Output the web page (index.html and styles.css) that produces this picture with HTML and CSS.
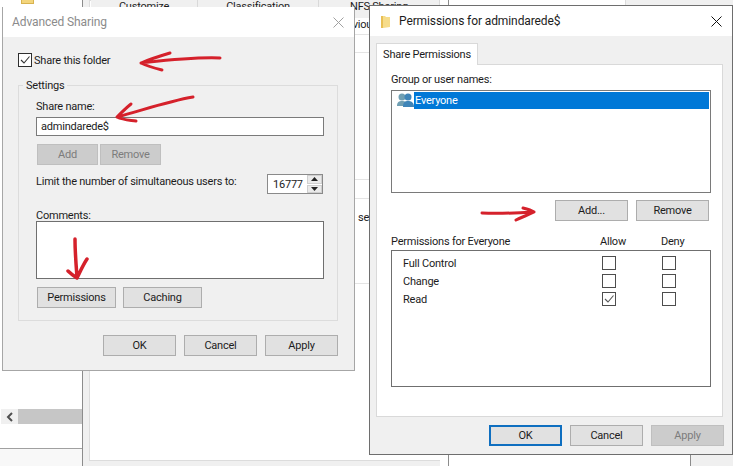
FILE: index.html
```html
<!DOCTYPE html>
<html lang="en">
<head>
<meta charset="utf-8">
<title>Advanced Sharing</title>
<link rel="stylesheet" href="styles.css">
</head>
<body>
<div class="desktop">
  <!-- windows behind -->
  <div class="explorer">
    <div class="tree-folder"></div>
    <div class="tree-name">Shar</div>
    <div class="hscroll">
      <span class="hscroll-btn"><svg width="10" height="10" viewBox="0 0 10 10"><path d="M7 1 3 5l4 4" fill="none" stroke="#505050" stroke-width="2"/></svg></span>
      <span class="hscroll-track"></span>
    </div>
    <div class="status"></div>
  </div>
  <div class="props">
    <div class="props-panel"></div>
    <div class="props-tabs">
      <span class="ptab ptab-a">Customize</span>
      <span class="ptab ptab-b">Classification</span>
      <span class="ptab ptab-c">NFS Sharing</span>
    </div>
    <div class="props-sub">Previous</div>
    <div class="props-line l0"></div>
    <div class="props-line l1"></div>
    <div class="props-line l2"></div>
    <div class="props-line l3"></div>
    <div class="props-line l4"></div>
    <div class="props-set">set</div>
  </div>
  <div class="back-right"></div>
  <div class="back-bottom"></div>

  <!-- Advanced Sharing -->
  <section class="win win-adv">
    <header class="titlebar">
      <span class="title title-off">Advanced Sharing</span>
      <svg class="close" width="11" height="11" viewBox="0 0 11 11"><path d="M.5.5l10 10M10.500.5l-10 10" stroke="#a0a0a0" fill="none"/></svg>
    </header>
    <div class="adv-body">
      <label class="share-check">
        <span class="box box-dark"><svg width="12" height="12" viewBox="0 0 12 12"><path d="M2 6l3 3 5.500-6.500" fill="none" stroke="#333" stroke-width="1.100"/></svg></span>
        <span class="share-text">Share this folder</span>
      </label>
      <fieldset class="settings">
        <legend>Settings</legend>
        <div class="lbl lbl-share">Share name:</div>
        <div class="input">admindarede$</div>
        <div class="btn-row small-btns">
          <span class="btn btn-off btn-s">Add</span>
          <span class="btn btn-off btn-s">Remove</span>
        </div>
        <div class="limit-row">
          <span class="limit-label">Limit the number of simultaneous users to:</span>
          <div class="spin">
            <span class="spin-val">16777</span>
            <span class="spin-btns">
              <span class="spin-b"><svg width="7" height="4" viewBox="0 0 7 4"><path d="M3.500 0 7 4H0z" fill="#222"/></svg></span>
              <span class="spin-b"><svg width="7" height="4" viewBox="0 0 7 4"><path d="M0 0h7L3.500 4z" fill="#222"/></svg></span>
            </span>
          </div>
        </div>
        <div class="lbl lbl-comments">Comments:</div>
        <div class="textarea"></div>
        <div class="btn-row perm-btns">
          <span class="btn btn-m">Permissions</span>
          <span class="btn btn-m">Caching</span>
        </div>
      </fieldset>
      <footer class="foot foot-adv">
        <span class="btn">OK</span>
        <span class="btn">Cancel</span>
        <span class="btn">Apply</span>
      </footer>
    </div>
  </section>

  <!-- Permissions -->
  <section class="win win-perm">
    <header class="titlebar titlebar-perm">
      <svg class="folder" width="10" height="13" viewBox="0 0 10 13"><path d="M0 1h4l1 1h4v10l-7 1H0z" fill="#f6dc8a"/><path d="M0 1h2v12H0z" fill="#e8bf55"/></svg>
      <span class="title">Permissions for admindarede$</span>
      <svg class="close" width="11" height="11" viewBox="0 0 11 11"><path d="M.5.5l10 10M10.500.5l-10 10" stroke="#111" fill="none"/></svg>
    </header>
    <div class="tabstrip"><span class="tab">Share Permissions</span></div>
    <div class="panel">
      <div class="lbl">Group or user names:</div>
      <div class="listbox">
        <div class="list-row">
          <svg class="people" width="17" height="15" viewBox="0 0 17 15">
            <circle cx="5" cy="4" r="3.500" fill="#6f9fb3"/>
            <path d="M0 13c0-4 2-5 5-5s5 1 5 5z" fill="#6f9fb3"/>
            <circle cx="11" cy="4" r="3.500" fill="#3f85b8"/>
            <path d="M6 14c0-5 2-6 5-6s6 1 6 6z" fill="#3f85b8"/>
          </svg>
          <span class="list-sel">Everyone</span>
        </div>
      </div>
      <div class="btn-row list-btns">
        <span class="btn">Add...</span>
        <span class="btn">Remove</span>
      </div>
      <div class="perm-head">
        <span>Permissions for Everyone</span>
        <span>Allow</span>
        <span>Deny</span>
      </div>
      <div class="perm-table">
        <span class="perm-name">Full Control</span><span class="box"></span><span class="box"></span>
        <span class="perm-name">Change</span><span class="box"></span><span class="box"></span>
        <span class="perm-name">Read</span>
        <span class="box"><svg width="12" height="12" viewBox="0 0 12 12"><path d="M2 6l3 3 5.500-6.500" fill="none" stroke="#555" stroke-width="1.100"/></svg></span>
        <span class="box"></span>
      </div>
    </div>
    <footer class="foot foot-perm">
      <span class="btn btn-default">OK</span>
      <span class="btn">Cancel</span>
      <span class="btn btn-off">Apply</span>
    </footer>
  </section>

  <!-- annotations -->
  <svg class="arrows" width="733" height="466" viewBox="0 0 733 466" fill="none" stroke="#d5212b" stroke-linecap="round" stroke-linejoin="round">
    <path stroke-width="3" d="M220 58c-28-1-52 2-79 5M170 53c-10 3-20 6-29 10 6 3 13 5 21 7"/>
    <path stroke-width="3" d="M193 97c-24 4-50 13-76 20M131 104c-5 4-10 9-14 13 6 3 12 3 19 4"/>
    <path stroke-width="3.500" d="M75 239c0 13 1 25 2 38M68 271c3 3 6 5 9 7 3-6 6-13 10-19"/>
    <path stroke-width="3" d="M482 213c17 1 35 0 52-1M523 208c4 1 8 2 11 4-6 3-12 5-18 8"/>
  </svg>
</div>
</body>
</html>
```
FILE: styles.css
```css
* { box-sizing: border-box; }
html, body { margin: 0; padding: 0; }
body {
  width: 733px;
  height: 466px;
  overflow: hidden;
  background: #fff;
  font-family: Roboto, "Liberation Sans", sans-serif;
  font-size: 11px;
  letter-spacing: -0.22px;
  line-height: 14px;
  color: #1c1c1c;
}
.desktop { position: relative; width: 733px; height: 466px; overflow: hidden; background: #fff; }

/* background windows */
.explorer { position: absolute; left: 0; top: 0; width: 83px; height: 466px; background: #fff; border-right: 1px solid #8c8c8c; }
.tree-folder { position: absolute; left: 21px; top: -4px; width: 13px; height: 8px; background: #f3d57c; border: 1px solid #d8b350; }
.tree-name { position: absolute; left: 45px; top: -10px; }
.hscroll { position: absolute; left: 1px; top: 409px; width: 81px; height: 15px; display: flex; }
.hscroll-btn { width: 17px; background: #f0f0f0; display: flex; align-items: center; justify-content: center; }
.hscroll-track { flex: 1; background: #c6c6c6; }
.status { position: absolute; left: 0; top: 448px; width: 82px; height: 18px; border-top: 1px solid #a0a0a0; background: #f8f8f8; }

.props { position: absolute; left: 83px; top: 0; width: 357px; height: 466px; background: #f0f0f0; overflow: hidden; }
.props-panel { position: absolute; left: 6px; top: 0; width: 351px; height: 461px; background: #fff; border: 1px solid #dcdcdc; border-right: 0; }
.props-tabs { position: absolute; left: 8px; top: 0; height: 18px; display: flex; }
.ptab { height: 18px; border-right: 1px solid #d9d9d9; background: #f0f0f0; text-align: center; line-height: 14px; }
.ptab-a { width: 107px; }
.ptab-b { width: 121px; }
.ptab-c { width: 121px; }
.props-sub { position: absolute; left: 254px; top: 18px; }
.props-set { position: absolute; left: 275px; top: 211px; }
.props-line { position: absolute; left: 8px; width: 349px; height: 1px; background: #e4e4e4; }
.l0 { top: 34px; }
.l1 { top: 52px; }
.l2 { top: 179px; }
.l3 { top: 198px; }
.l4 { top: 283px; }
.back-right { position: absolute; left: 448px; top: 0; width: 285px; height: 466px; background: #fff; border-left: 1px solid #8c8c8c; }
.back-right::after { content: ""; position: absolute; left: 176px; top: 0; width: 108px; height: 6px; background: #f0f0f0; border-left: 1px solid #dcdcdc; }
.back-bottom { position: absolute; left: 690px; top: 450px; width: 43px; height: 16px; background: #f0f0f0; border-left: 1px solid #8c8c8c; }

/* dialogs */
.win { position: absolute; background: #f0f0f0; border: 1px solid #8f8f8f; border-top: 0; }
.win-adv { left: 2px; top: 7px; width: 353px; height: 364px; border-color: #a6a6a6; }
.win-perm { left: 369px; top: 5px; width: 364px; height: 450px; border-color: #6e6e6e; border-top: 1px solid #6e6e6e; }
.titlebar { height: 30px; background: #fff; display: flex; align-items: center; padding: 0 10px 0 9px; }
.title { flex: 1; font-size: 12px; letter-spacing: -0.1px; }
.title-off { color: #8b8b8b; }
.titlebar-perm { padding: 0 10px 0 11px; gap: 8px; }
.close { flex: none; }
.folder { flex: none; }

.btn {
  width: 73px; height: 21px;
  padding-top: 1px;
  display: flex; align-items: center; justify-content: center;
  background: #e1e1e1; border: 1px solid #adadad;
  color: #1c1c1c;
}
.btn-off { background: #cccccc; border-color: #bfbfbf; color: #7c7c7c; }
.btn-default { border: 2px solid #0f6fc0; }
.btn-s { width: 61px; }
.btn-m { width: 79px; }
.btn-row { display: flex; }

.box { width: 14px; height: 14px; background: #fff; border: 1px solid #4d4d4d; display: flex; align-items: center; justify-content: center; }
.box-dark { border-color: #2e2e2e; }

.adv-body { display: flex; flex-direction: column; }
.share-check { display: flex; align-items: center; gap: 2px; margin: 16px 0 0 15px; height: 14px; }
.share-text { padding-top: 2px; }
.settings { width: 320px; height: 244px; margin: 10px 0 0 15px; padding: 0 0 0 17px; border: 1px solid #dcdcdc; min-width: 0; }
.settings legend { padding: 1px 3px 0; margin-left: -13px; height: 16px; line-height: 16px; }
.lbl-share { margin-top: 7px; }
.input { width: 288px; height: 19px; margin-top: 3px; background: #fff; border: 1px solid #7a7a7a; padding-left: 4px; line-height: 18px; }
.small-btns { margin: 8px 0 0 1px; gap: 2px; }
.limit-row { display: flex; margin-top: 9px; }
.limit-label { width: 231px; flex: none; white-space: nowrap; padding-top: 1px; }
.spin { width: 56px; height: 20px; background: #fff; border: 1px solid #8a8a8a; display: flex; justify-content: space-between; overflow: hidden; }
.spin-val { padding-left: 5px; line-height: 19px; width: 38px; overflow: hidden; }
.spin-btns { width: 15px; display: flex; flex-direction: column; gap: 1px; }
.spin-b { flex: 1; background: #eaeaea; border: 1px solid #cfcfcf; display: flex; align-items: center; justify-content: center; }
.lbl-comments { margin-top: 15px; margin-bottom: -2px; }
.textarea { width: 288px; height: 58px; background: #fff; border: 1px solid #6f6f6f; }
.perm-btns { margin: 8px 0 0 1px; gap: 7px; }
.foot { display: flex; gap: 8px; }
.foot-adv { margin: 14px 0 0 100px; }

.tabstrip { display: flex; padding: 7px 0 0 6px; height: 28px; }
.tab { width: 102px; height: 22px; background: #fff; border: 1px solid #d9d9d9; border-bottom: 0; display: flex; align-items: center; justify-content: center; position: relative; z-index: 1; }
.panel { width: 347px; height: 353px; margin-left: 6px; background: #fff; border: 1px solid #d9d9d9; padding: 8px 0 0 14px; }
.listbox { width: 320px; height: 103px; margin-top: 3px; border: 1px solid #7a7a7a; padding: 1px; background: #fff; }
.list-row { display: flex; align-items: center; height: 17px; }
.people { flex: none; margin-left: 4px; }
.list-sel { flex: 1; height: 17px; background: #0078d7; color: #fff; padding-left: 1px; line-height: 17px; }
.list-btns { gap: 8px; margin: 7px 0 0 164px; }
.perm-head { display: grid; grid-template-columns: 209px 61px auto; margin-top: 14px; height: 16px; }
.perm-table { width: 320px; height: 137px; margin-top: -1px; border: 1px solid #6f6f6f; padding: 3px 0 0 11px; display: grid; grid-template-columns: 199px 60px 14px; grid-auto-rows: 18px; align-items: center; }
.perm-name { padding-top: 2px; }
.foot-perm { margin: 8px 0 0 119px; }

.arrows { position: absolute; left: 0; top: 0; pointer-events: none; z-index: 5; }
```
